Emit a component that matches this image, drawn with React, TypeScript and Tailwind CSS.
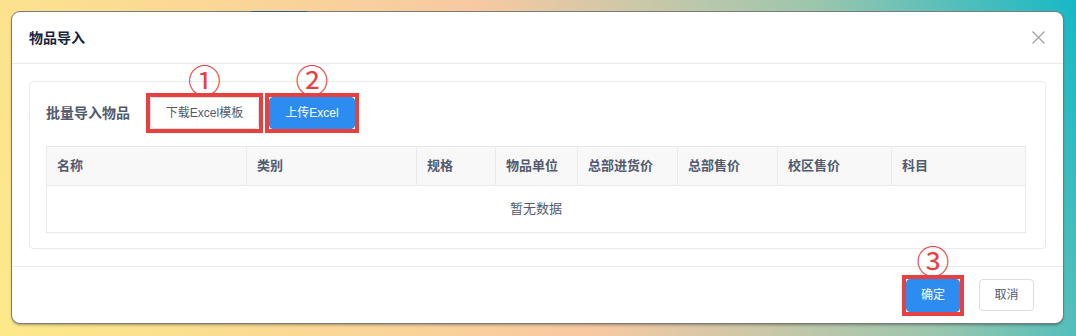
import React from "react";

const cols = [
  { name: "名称", w: 200 },
  { name: "类别", w: 170 },
  { name: "规格", w: 79 },
  { name: "物品单位", w: 82 },
  { name: "总部进货价", w: 100 },
  { name: "总部售价", w: 100 },
  { name: "校区售价", w: 114 },
  { name: "科目", w: 133 },
];

function Mark({ n, children }: { n: string; children: React.ReactNode }) {
  return (
    <div className="relative border-4 border-[#e8403f]">
      <span
        className="absolute left-1/2 -translate-x-1/2 top-[-36px] h-[36px] flex items-center text-[33px] leading-none text-[#e8403f] font-normal"
        style={{ fontFamily: '"Noto Sans CJK SC", sans-serif' }}
      >
        {n}
      </span>
      {children}
    </div>
  );
}

export default function App() {
  return (
    <div
      className="relative w-[1076px] h-[336px] overflow-hidden pt-[12px] pl-[12px] bg-[linear-gradient(70deg,#fde98a_0%,#fbdc92_20%,#f7c9a2_50%,#9cc6ae_78%,#16b8c6_100%)]"
      style={{ fontFamily: '"Liberation Sans", "Noto Sans CJK SC", sans-serif' }}
    >
      <div className="relative w-[1051px] h-[311px] bg-white rounded-[8px] shadow-[0_0_0_1px_#7a7a7a,0_2px_3px_rgba(0,0,0,0.35)] flex flex-col">
        <div className="absolute top-[-1px] left-[239px] w-[56px] h-[1px] bg-[#2f5d8c]" />
        {/* header */}
        <div className="h-[52px] px-[17px] flex items-center justify-between border-b border-[#e8eaec] shrink-0">
          <span className="text-[14px] font-bold text-[#17233d] leading-none">物品导入</span>
          <svg width="13" height="13" viewBox="0 0 13 13" className="mr-[1px]">
            <path d="M0.5 0.5L12.5 12.5M12.5 0.5L0.5 12.5" stroke="#a0a0a0" strokeWidth="1.2" fill="none" />
          </svg>
        </div>
        {/* body */}
        <div className="px-[17px] pt-[17px] pb-[17px] border-b border-[#e8eaec]">
          <div className="border border-[#e8eaec] rounded-[4px] px-[16px] pt-[11px] pb-[15px]">
            <div className="flex items-center">
              <span className="w-[100px] text-[14px] font-bold text-[#515a6e]">批量导入物品</span>
              <Mark n="①">
                <button className="w-[109px] h-[32px] bg-white border border-[#dcdee2] rounded-[4px] text-[12px] text-[#515a6e] flex items-center justify-center">
                  下载Excel模板
                </button>
              </Mark>
              <div className="w-[2px]" />
              <Mark n="②">
                <button className="w-[86px] h-[32px] bg-[#2d8cf0] border border-[#2d8cf0] rounded-[4px] text-[12px] text-white flex items-center justify-center">
                  上传Excel
                </button>
              </Mark>
            </div>
            <div className="mt-[13px] border border-[#e8eaec] w-[980px]">
              <div className="flex h-[39px] bg-[#f8f8f9] border-b border-[#e8eaec]">
                {cols.map((c, i) => (
                  <div
                    key={c.name}
                    className={`flex items-center pl-[10px] text-[13px] font-bold text-[#515a6e] ${i < cols.length - 1 ? "border-r border-[#e8eaec]" : ""}`}
                    style={{ width: c.w }}
                  >
                    {c.name}
                  </div>
                ))}
              </div>
              <div className="h-[46px] flex items-center justify-center text-[13px] text-[#515a6e]">
                暂无数据
              </div>
            </div>
          </div>
        </div>
        {/* footer */}
        <div className="flex-1 flex items-center justify-end pr-[29px]">
          <Mark n="③">
            <button className="w-[54px] h-[33px] bg-[#2d8cf0] border border-[#2d8cf0] rounded-[4px] text-[12px] text-white flex items-center justify-center">
              确定
            </button>
          </Mark>
          <button className="ml-[15px] w-[55px] h-[32px] bg-white border border-[#dcdee2] rounded-[4px] text-[12px] text-[#515a6e] flex items-center justify-center">
            取消
          </button>
        </div>
      </div>
    </div>
  );
}
